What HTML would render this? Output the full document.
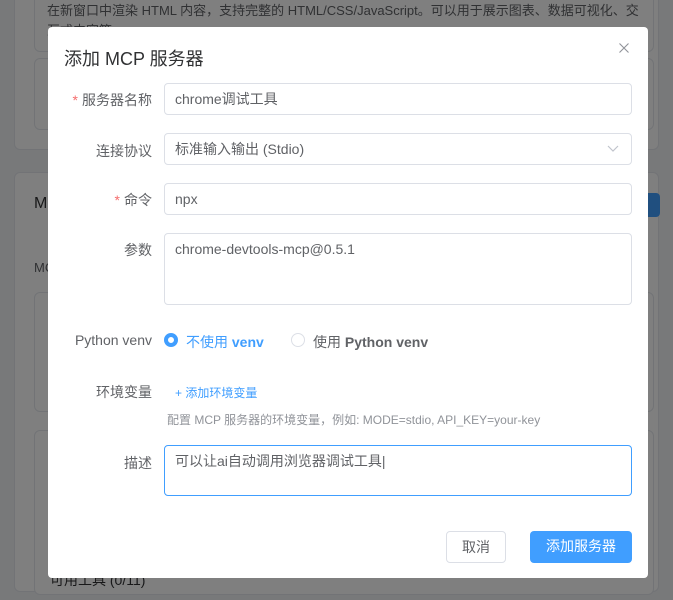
<!DOCTYPE html>
<html><head><meta charset="utf-8"><style>
*{box-sizing:border-box;margin:0;padding:0}
html{width:673px;height:600px;overflow:hidden}
body{width:673px;height:600px;overflow:hidden;background:#f0f2f5;font-family:"Liberation Sans","Noto Sans CJK SC",sans-serif;position:relative;font-size:14px;color:#606266}
.card{position:absolute;background:#fff;border:1px solid #e4e7ed;border-radius:6px}
.mask{position:fixed;left:0;top:0;width:673px;height:600px;background:rgba(0,0,0,0.5)}
.dlg{position:absolute;left:48px;top:27px;width:600px;height:551px;background:#fff;border-radius:4px}
.t{position:absolute;left:16px;top:18px;font-size:18px;color:#303133}
.lb{position:absolute;right:496px;text-align:right;color:#606266;white-space:nowrap}
.lb b{color:#f56c6c;font-weight:normal;margin-right:4px}
.in{position:absolute;left:116px;width:468px;height:32px;border:1px solid #dcdfe6;border-radius:4px;padding:0 10px;line-height:30px;color:#606266}
.ta{height:72px;line-height:20px;padding-top:5px}
.btn{position:absolute;top:504px;height:32px;border-radius:4px;line-height:30px;text-align:center;font-size:14px}
</style></head><body>
<div class="card" style="left:14px;top:-10px;width:645px;height:160px"></div>
<div class="card" style="left:34px;top:-10px;width:620px;height:62px;font-size:13px;color:#606266;padding:10px 12px;line-height:20px">在新窗口中渲染 HTML 内容，支持完整的 HTML/CSS/JavaScript。可以用于展示图表、数据可视化、交互式内容等。</div>
<div class="card" style="left:34px;top:58px;width:620px;height:72px"></div>
<div class="card" style="left:14px;top:172px;width:645px;height:420px"></div>
<div style="position:absolute;left:34px;top:195px;font-size:16px;color:#303133">MCP</div>
<div style="position:absolute;left:34px;top:260px;font-size:13px">MC</div>
<div class="card" style="left:34px;top:292px;width:620px;height:120px"></div>
<div class="card" style="left:34px;top:430px;width:620px;height:165px"></div>
<div style="position:absolute;left:640px;top:193px;width:20px;height:24px;background:#409eff;border-radius:4px"></div>
<div style="position:absolute;left:50px;top:570px;font-size:14px;color:#303133">可用工具 (0/11)</div>
<div class="mask"></div>
<div class="dlg">
<div class="t">添加 MCP 服务器</div>
<svg style="position:absolute;right:19px;top:16px" width="10" height="10" viewBox="0 0 10 10"><path d="M0.5 0.5l9 9M9.5 0.5l-9 9" stroke="#909399" stroke-width="1.1"/></svg>
<div class="lb" style="top:63px"><b>*</b>服务器名称</div>
<div class="in" style="top:56px">chrome调试工具</div>
<div class="lb" style="top:114px">连接协议</div>
<div class="in" style="top:106px">标准输入输出 (Stdio)<svg style="position:absolute;right:12px;top:11px" width="12" height="8" viewBox="0 0 12 8"><path d="M1 1l5 5 5-5" fill="none" stroke="#c0c4cc" stroke-width="1.2"/></svg></div>
<div class="lb" style="top:163px"><b>*</b>命令</div>
<div class="in" style="top:156px">npx</div>
<div class="lb" style="top:213px">参数</div>
<div class="in ta" style="top:206px">chrome-devtools-mcp@0.5.1</div>
<div class="lb" style="top:305px">Python venv</div>
<div style="position:absolute;left:116px;top:306px;width:14px;height:14px;border-radius:50%;border:4px solid #409eff;background:#fff"></div>
<div style="position:absolute;left:138px;top:305px;color:#409eff">不使用 <b>venv</b></div>
<div style="position:absolute;left:243px;top:306px;width:14px;height:14px;border-radius:50%;border:1px solid #dcdfe6"></div>
<div style="position:absolute;left:265px;top:305px;color:#606266">使用 <b>Python venv</b></div>
<div class="lb" style="top:355px">环境变量</div>
<div style="position:absolute;left:127px;top:357px;font-size:12px;color:#409eff">+ 添加环境变量</div>
<div style="position:absolute;left:119px;top:384px;font-size:12px;color:#909399">配置 MCP 服务器的环境变量，例如: MODE=stdio, API_KEY=your-key</div>
<div class="lb" style="top:426px">描述</div>
<div class="in ta" style="top:418px;height:51px;border-color:#409eff">可以让ai自动调用浏览器调试工具|</div>
<div class="btn" style="left:398px;width:60px;border:1px solid #dcdfe6;color:#606266">取消</div>
<div class="btn" style="left:482px;width:102px;background:#409eff;color:#fff">添加服务器</div>
</div>
</body></html>
